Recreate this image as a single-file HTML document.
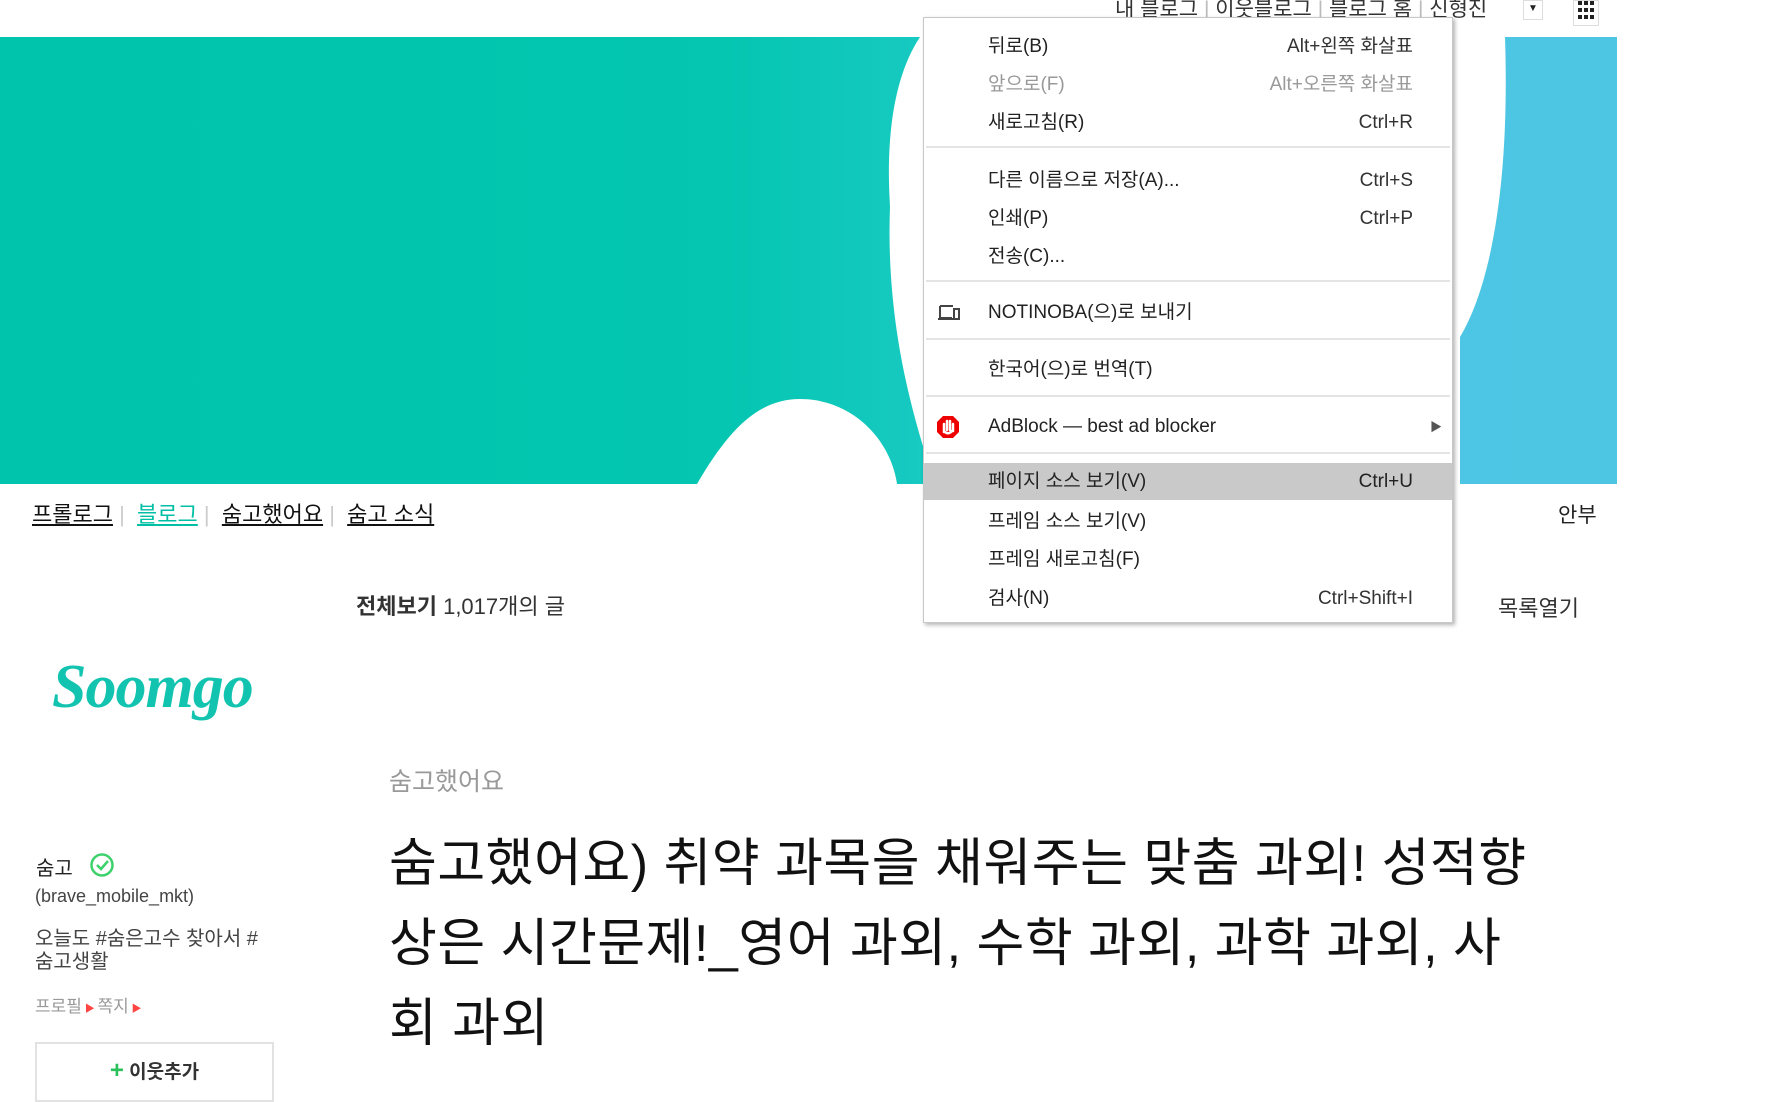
<!DOCTYPE html>
<html><head><meta charset="utf-8"><style>
*{margin:0;padding:0;box-sizing:border-box}
body{width:1781px;height:1099px;overflow:hidden;background:#fff;position:relative;font-family:"Liberation Sans","Noto Sans CJK KR",sans-serif;color:#222}
.a{position:absolute;white-space:nowrap}
#banner{position:absolute;left:0;top:37px;width:1617px;height:447px;background:linear-gradient(90deg,#00c4ab 0%,#04c6b1 45%,#20cbc8 62%,#4cc7e3 80%,#4dc6e4 100%);overflow:hidden}
.menu{position:absolute;left:923px;top:17px;width:530px;height:606px;background:#fff;border:1px solid #c8c8c8;box-shadow:2px 2px 4px rgba(0,0,0,.3);font-size:19px;color:#222}
.it{position:absolute;left:0;width:100%;height:38px;line-height:38px}
.it .l{position:absolute;left:64px}
.it .r{position:absolute;right:39px;color:#333}
.sep{position:absolute;left:2px;right:2px;height:2px;background:#e4e4e4}
.nav{font-size:22px;top:497px}
</style></head><body>
<div id="banner">
<svg width="1617" height="447" style="position:absolute;left:0;top:0">
<path d="M920 0 C880 60 890 160 890 170 C885 300 920 400 935 447 L1460 447 L1460 300 C1490 250 1510 150 1505 0 Z" fill="#fff"/>
<path d="M697 447 C730 390 760 362 800 362 C850 362 890 400 897 447 Z" fill="#fff"/>
</svg>
</div>
<div class="a" style="left:1115px;top:-7px;font-size:21px;color:#333">내 블로그 <span style="color:#bbb">|</span> 이웃블로그 <span style="color:#bbb">|</span> 블로그 홈 <span style="color:#bbb">|</span> 신형진</div>
<div class="a" style="left:1523px;top:0;width:20px;height:20px;border:1px solid #ddd;font-size:10px;text-align:center;line-height:16px">▼</div>
<div class="a" style="left:1573px;top:0;width:26px;height:26px;border:1px solid #ddd;background:#fff">
<svg width="24" height="24"><g fill="#222"><rect x="4" y="0" width="4" height="4"/><rect x="10" y="0" width="4" height="4"/><rect x="16" y="0" width="4" height="4"/><rect x="4" y="7" width="4" height="4"/><rect x="10" y="7" width="4" height="4"/><rect x="16" y="7" width="4" height="4"/><rect x="4" y="14" width="4" height="4"/><rect x="10" y="14" width="4" height="4"/><rect x="16" y="14" width="4" height="4"/></g></svg></div>

<div class="a nav" style="left:32px;color:#111"><u>프롤로그</u> <span style="color:#ccc">|</span>&nbsp; <u style="color:#00bfa5">블로그</u> <span style="color:#ccc">|</span>&nbsp; <u>숨고했어요</u> <span style="color:#ccc">|</span>&nbsp; <u>숨고 소식</u></div>
<div class="a" style="left:1558px;top:499px;font-size:21px">안부</div>
<div class="a" style="left:356px;top:589px;font-size:22px;color:#333"><b>전체보기</b> 1,017개의 글</div>
<div class="a" style="left:1498px;top:591px;font-size:22px;color:#333">목록열기</div>

<div class="a" style="left:52px;top:652px;font-size:62px;font-family:'Liberation Serif',serif;font-style:italic;font-weight:bold;color:#12c4b0;letter-spacing:-1px">Soomgo</div>

<div class="a" style="left:389px;top:762px;font-size:25px;color:#999">숨고했어요</div>
<div class="a" style="left:389px;top:824px;font-size:52px;line-height:80px;color:#111;letter-spacing:0.5px">숨고했어요) 취약 과목을 채워주는 맞춤 과외! 성적향<br>상은 시간문제!_영어 과외, 수학 과외, 과학 과외, 사<br>회 과외</div>

<div class="a" style="left:36px;top:852px;font-size:20px;color:#222">숨고</div>
<svg class="a" style="left:89px;top:852px" width="26" height="26"><circle cx="13" cy="13" r="10.5" fill="none" stroke="#3dd16b" stroke-width="2.5"/><path d="M8 13 L12 17 L19 9" fill="none" stroke="#3dd16b" stroke-width="2.5"/></svg>
<div class="a" style="left:35px;top:886px;font-size:18px;color:#444">(brave_mobile_mkt)</div>
<div class="a" style="left:35px;top:928px;font-size:20px;line-height:23px;color:#444">오늘도 #숨은고수 찾아서 #<br>숨고생활</div>
<div class="a" style="left:35px;top:992px;font-size:17px;color:#999">프로필<span style="color:#f44;font-size:10px"> ▶ </span> 쪽지<span style="color:#f44;font-size:10px"> ▶</span></div>
<div class="a" style="left:35px;top:1042px;width:239px;height:60px;border:2px solid #e2e2e2;text-align:center;line-height:54px;font-size:19px;font-weight:bold;color:#333"><span style="color:#2bc05a;font-size:24px">+</span> 이웃추가</div>

<div class="menu">
<div class="it" style="top:10px"><span class="l">뒤로(B)</span><span class="r">Alt+왼쪽 화살표</span></div>
<div class="it" style="top:48px;color:#999"><span class="l">앞으로(F)</span><span class="r" style="color:#999">Alt+오른쪽 화살표</span></div>
<div class="it" style="top:86px"><span class="l">새로고침(R)</span><span class="r">Ctrl+R</span></div>
<div class="sep" style="top:128px"></div>
<div class="it" style="top:144px"><span class="l">다른 이름으로 저장(A)...</span><span class="r">Ctrl+S</span></div>
<div class="it" style="top:182px"><span class="l">인쇄(P)</span><span class="r">Ctrl+P</span></div>
<div class="it" style="top:220px"><span class="l">전송(C)...</span></div>
<div class="sep" style="top:262px"></div>
<div class="it" style="top:276px"><svg style="position:absolute;left:13px;top:11px" width="24" height="16"><path d="M3 1 H16 M3 1 V13 H15 M1 14 H16" fill="none" stroke="#444" stroke-width="2"/><rect x="17" y="4" width="5" height="10" fill="none" stroke="#444" stroke-width="2"/></svg><span class="l">NOTINOBA(으)로 보내기</span></div>
<div class="sep" style="top:320px"></div>
<div class="it" style="top:333px"><span class="l">한국어(으)로 번역(T)</span></div>
<div class="sep" style="top:377px"></div>
<div class="it" style="top:390px"><svg style="position:absolute;left:12px;top:7px" width="24" height="24"><polygon points="7,1 17,1 23,7 23,17 17,23 7,23 1,17 1,7" fill="#e00"/><path d="M8 17 V9 M11 15 V6 M14 15 V6 M17 16 V9 M8 16 Q12 21 17 15" stroke="#fff" stroke-width="2.5" fill="none" stroke-linecap="round"/></svg><span class="l">AdBlock — best ad blocker</span><span style="position:absolute;right:10px;top:0;font-size:12px;color:#555">▶</span></div>
<div class="sep" style="top:434px"></div>
<div class="it" style="top:445px;height:37px;background:#c9c9c9"><span class="l">페이지 소스 보기(V)</span><span class="r" style="color:#222">Ctrl+U</span></div>
<div class="it" style="top:485px"><span class="l">프레임 소스 보기(V)</span></div>
<div class="it" style="top:523px"><span class="l">프레임 새로고침(F)</span></div>
<div class="it" style="top:562px"><span class="l">검사(N)</span><span class="r">Ctrl+Shift+I</span></div>
</div>
</body></html>
